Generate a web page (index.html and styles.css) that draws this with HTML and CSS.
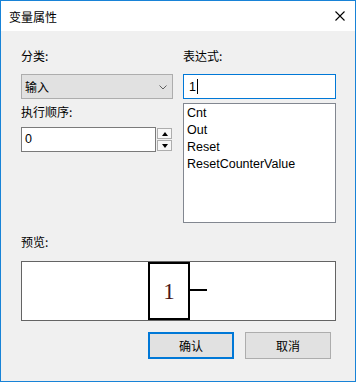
FILE: index.html
```html
<!DOCTYPE html>
<html lang="zh-CN">

<head>
    <meta charset="UTF-8">
    <meta name="viewport" content="width=device-width, initial-scale=1.0">
    <title>变量属性</title>

    <link rel="stylesheet" href="styles.css">
</head>

<body>
    <div class="window">
        <div class="titlebar">
            <span class="title">变量属性</span>
            <svg class="close" width="10" height="10" viewBox="0 0 10 10">
                <path d="M0.5 0.5L9.5 9.5M9.5 0.5L0.5 9.5" stroke="#000" stroke-width="1.1" fill="none"/>
            </svg>
        </div>

        <div class="content">
            <div class="fields">
                <div class="col">
                    <label class="lbl">分类:</label>
                    <div class="combo">
                        <span>输入</span>
                        <svg width="8" height="5" viewBox="0 0 8 5">
                            <path d="M0.5 0.5L4 4L7.5 0.5" stroke="#606060" stroke-width="1" fill="none"/>
                        </svg>
                    </div>

                    <label class="lbl lbl-order">执行顺序:</label>
                    <div class="spin">
                        <div class="spin-input">0</div>
                        <div class="spin-btns">
                            <div class="spin-btn">
                                <svg width="6" height="4" viewBox="0 0 6 4"><path d="M3 0L6 4H0Z" fill="#000"/></svg>
                            </div>
                            <div class="spin-btn">
                                <svg width="6" height="4" viewBox="0 0 6 4"><path d="M0 0H6L3 4Z" fill="#000"/></svg>
                            </div>
                        </div>
                    </div>
                </div>

                <div class="col">
                    <label class="lbl">表达式:</label>
                    <div class="expr">1<span class="caret"></span></div>
                    <ul class="list">
                        <li>Cnt</li>
                        <li>Out</li>
                        <li>Reset</li>
                        <li>ResetCounterValue</li>
                    </ul>
                </div>
            </div>

            <label class="lbl lbl-preview">预览:</label>
            <div class="preview">
                <div class="block">1</div>
                <div class="pin"></div>
            </div>

            <div class="actions">
                <button type="button" class="btn btn-default">确认</button>
                <button type="button" class="btn">取消</button>
            </div>
        </div>
    </div>
</body>

</html>
```

FILE: styles.css
```css
body {
    margin: 0;
    font-family: "Noto Sans CJK SC", sans-serif;
    font-size: 12px;
    color: #000;
}

.window {
    width: 356px;
    height: 382px;
    box-sizing: border-box;
    border: 1px solid #1883d7;
    background-color: #f0f0f0;
}

.titlebar {
    height: 30px;
    background-color: #fff;
    display: flex;
    align-items: center;
    justify-content: space-between;
    padding: 0 10px 0 8px;
}

.title {
    font-size: 12px;
    line-height: 16px;
    margin-top: 1px;
}

.close {
    display: block;
}

.content {
    padding: 17px 19px 0 20px;
}

.fields {
    display: flex;
    gap: 10px;
}

.col {
    display: flex;
    flex-direction: column;
}

.col:first-child {
    width: 152px;
}

.col:last-child {
    width: 153px;
}

.lbl {
    display: block;
    height: 16px;
    line-height: 16px;
    margin-bottom: 10px;
}

.lbl-order {
    margin-top: 5px;
    margin-bottom: 7px;
}

.combo {
    height: 25px;
    box-sizing: border-box;
    border: 1px solid #adadad;
    background-color: #e1e1e1;
    display: flex;
    align-items: center;
    justify-content: space-between;
    padding: 0 5px 0 3px;
}

.combo svg {
    display: block;
    margin-top: 1px;
}

.spin {
    display: flex;
    gap: 1px;
    width: 151px;
}

.spin-input {
    width: 135px;
    height: 25px;
    box-sizing: border-box;
    border: 1px solid #7a7a7a;
    background-color: #fff;
    padding-left: 3px;
    line-height: 23px;
    font-family: "Liberation Sans", sans-serif;
    font-size: 12.5px;
}

.spin-btns {
    display: flex;
    flex-direction: column;
    gap: 1px;
    padding-top: 1px;
}

.spin-btn {
    width: 15px;
    height: 11px;
    box-sizing: border-box;
    border: 1px solid #adadad;
    background-color: #f7f7f7;
    display: flex;
    align-items: center;
    justify-content: center;
}

.spin-btn svg {
    display: block;
}

.expr {
    height: 25px;
    box-sizing: border-box;
    border: 1px solid #0078d7;
    background-color: #fff;
    padding-left: 5px;
    display: flex;
    align-items: center;
    font-family: "Liberation Sans", sans-serif;
    font-size: 12.5px;
}

.caret {
    display: inline-block;
    width: 1px;
    height: 15px;
    background-color: #000;
    margin-left: 1px;
}

.list {
    list-style: none;
    margin: 4px 0 0 0;
    padding: 1px 3px;
    height: 120px;
    box-sizing: border-box;
    border: 1px solid #828790;
    background-color: #fff;
    font-family: "Liberation Sans", sans-serif;
    font-size: 12.5px;
}

.list li {
    line-height: 17px;
}

.lbl-preview {
    margin-top: 11px;
    margin-bottom: 11px;
}

.preview {
    height: 60px;
    box-sizing: border-box;
    border: 1px solid #646464;
    background-color: #fff;
    display: flex;
    justify-content: center;
    align-items: center;
    padding-right: 2px;
}

.block {
    width: 42px;
    height: 58px;
    box-sizing: border-box;
    border: 2px solid #000;
    display: flex;
    align-items: center;
    justify-content: center;
    font-family: "Liberation Serif", serif;
    font-size: 23px;
    color: #4a1818;
    padding-top: 1px;
}

.pin {
    width: 17px;
    height: 2px;
    background-color: #000;
    margin-top: -3px;
}

.actions {
    display: flex;
    justify-content: flex-end;
    gap: 11px;
    margin-top: 11px;
    margin-right: 5px;
}

.btn {
    width: 86px;
    height: 27px;
    box-sizing: border-box;
    border: 1px solid #adadad;
    background-color: #e1e1e1;
    font-family: "Noto Sans CJK SC", sans-serif;
    font-size: 12px;
    color: #000;
    padding: 0;
}

.btn-default {
    border: 2px solid #0078d7;
}
```
